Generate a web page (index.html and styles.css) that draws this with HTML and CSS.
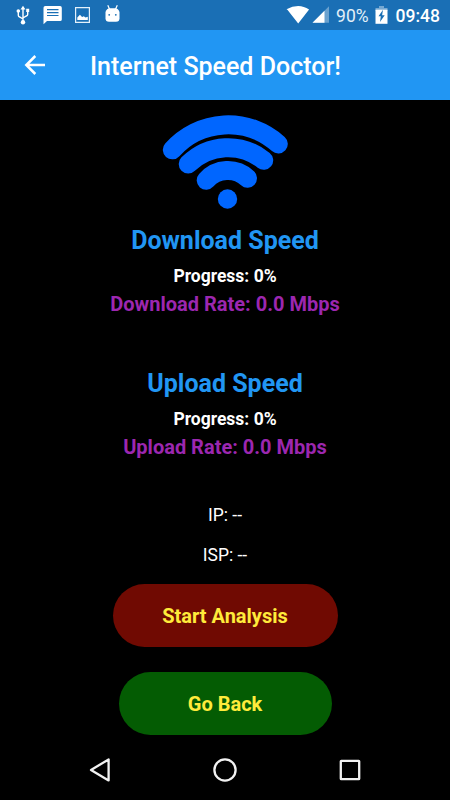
FILE: index.html
```
<!DOCTYPE html>
<html lang="en">
<head>
    <meta charset="UTF-8">
    <meta name="viewport" content="width=device-width, initial-scale=1.0">
    <title>Internet Speed Doctor!</title>
    <link rel="stylesheet" href="styles.css">
</head>
<body>
    <div class="status-bar">
        <svg class="status-icons" width="125" height="30" viewBox="0 0 125 30">
            <!-- usb -->
            <g fill="none" stroke="#fff" stroke-width="1.4">
                <path d="M23 22V8M18.3 12v3.2q0 1.3 1.3 1.8l3.4 2M27.7 11v3.2q0 1.3-1.3 1.8l-3.4 2"/>
            </g>
            <path d="M20.5 9.5L23 5.7l2.5 3.8zM26.2 8.7h3v3.2h-3z" fill="#fff"/>
            <circle cx="18.3" cy="11" r="1.8" fill="#fff"/>
            <circle cx="23" cy="22.3" r="2.2" fill="#fff"/>
            <!-- message -->
            <path d="M45.3 6h14.8q1.7 0 1.7 1.7v11.7q0 1.7-1.7 1.7H47l-3.5 3.2V7.7q0-1.7 1.8-1.7z" fill="#fff"/>
            <path d="M47 9.7h11.5M47 12.6h11.5M47 15.5h11.5" stroke="#1a6fb5" stroke-width="1.2"/>
            <!-- picture -->
            <path d="M75.6 7.7h13.8v14.6H75.6z" fill="none" stroke="#e4f1fb" stroke-width="1.2"/>
            <path d="M77.3 20v-2.5l2.6-2.7 2.2 2.2 1.7-.8 1.7 1.3 2.3-.7V20z" fill="#fff"/>
            <!-- android head -->
            <path d="M107.8 5.2l1.8 4M117.3 5.2l-1.8 4" stroke="#fff" stroke-width="1.2"/>
            <path d="M105.5 12q1-3.8 4.5-3.8h5q3.5 0 4.5 3.8v6.3q0 3.5-3.5 3.5h-7q-3.5 0-3.5-3.5z" fill="#fff"/>
            <circle cx="109.2" cy="14.8" r=".9" fill="#1a6fb5"/>
            <circle cx="115.8" cy="14.8" r=".9" fill="#1a6fb5"/>
        </svg>
        <div class="status-right">
            <svg width="42" height="30" viewBox="0 0 42 30">
                <path d="M-1.5 9.3Q4.5 6 10.2 6t10.9 3.5L10.2 23.5-.6 9.7z" fill="#fff"/>
                <path d="M24.5 22.8L41 6.2v16.6z" fill="#fff" opacity=".35"/>
                <path d="M24.5 22.8L36.5 10.7v12.1z" fill="#fff"/>
            </svg>
            <span class="battery-level">90%</span>
            <svg class="battery" width="13" height="30" viewBox="0 0 13 30">
                <path d="M4 6h5v2h3.5v3H.5V8H4z" fill="#fff" opacity=".4"/>
                <path d="M.5 9.7h12v14.1H.5z" fill="#fff"/>
                <path d="M8 9.8l-4.5 6.5h2.3L5 22l4.7-6.8H7.1z" fill="#1a6fb5"/>
            </svg>
            <span class="clock">09:48</span>
        </div>
    </div>

    <header class="app-bar">
        <svg class="back" width="20" height="20" viewBox="0 0 20 20">
            <path d="M20 10H1.8M10.3 1L1.3 10l9 9" fill="none" stroke="#fff" stroke-width="2.5"/>
        </svg>
        <h1>Internet Speed Doctor!</h1>
    </header>

    <main>
        <svg class="wifi" width="126" height="95" viewBox="162 115 126 95">
            <g fill="none" stroke="#06f" stroke-width="19" stroke-linecap="round">
                <path d="M172.3 149.8A75 75 0 0 1 278.3 144"/>
                <path d="M188.2 164.1A56.5 56.5 0 0 1 263.7 160.3"/>
                <path d="M206.2 180.3A29 29 0 0 1 247.5 178.2"/>
            </g>
            <circle cx="227.5" cy="199" r="9.7" fill="#06f"/>
        </svg>

        <section class="speed">
            <h2>Download Speed</h2>
            <p class="progress">Progress: 0%</p>
            <p class="rate">Download Rate: 0.0 Mbps</p>
        </section>

        <section class="speed">
            <h2>Upload Speed</h2>
            <p class="progress">Progress: 0%</p>
            <p class="rate">Upload Rate: 0.0 Mbps</p>
        </section>

        <div class="info">
            <p>IP: --</p>
            <p>ISP: --</p>
        </div>

        <div class="actions">
            <button class="start">Start Analysis</button>
            <button class="go-back">Go Back</button>
        </div>
    </main>

    <nav class="nav-bar">
        <svg width="24" height="24" viewBox="0 0 24 24"><path d="M20.6 1.4v21L3 12z"/></svg>
        <svg width="24" height="24" viewBox="0 0 24 24"><circle cx="12" cy="12" r="10.6"/></svg>
        <svg width="24" height="24" viewBox="0 0 24 24"><rect x="2.8" y="2.8" width="18.4" height="18.4" rx=".5"/></svg>
    </nav>
</body>
</html>
```
FILE: styles.css
```
* {
    box-sizing: border-box;
}
body {
    font-family: Roboto, sans-serif;
    background-color: #000;
    color: #fff;
    margin: 0;
    height: 800px;
    display: flex;
    flex-direction: column;
}
h1, h2, p {
    margin: 0;
}
svg {
    display: block;
    flex: none;
    overflow: visible;
}
.status-bar {
    flex: none;
    height: 30px;
    background-color: #1a6fb5;
    display: flex;
    justify-content: space-between;
}
.status-right {
    display: flex;
    align-items: center;
    padding-right: 10px;
    font-size: 17.5px;
    line-height: 30px;
    white-space: nowrap;
}
.battery-level {
    margin-left: 6px;
    padding-top: 2px;
    color: #e3eff8;
}
.battery {
    margin: 0 8px 0 6px;
}
.clock {
    font-weight: 500;
    padding-top: 2px;
}
.app-bar {
    flex: none;
    height: 70px;
    background-color: #2196f3;
    display: flex;
    align-items: center;
    padding-left: 25px;
}
.app-bar h1 {
    margin: 4px 0 0 45px;
    font-size: 25px;
    font-weight: 500;
    line-height: 30px;
}
main {
    flex: 1;
    display: flex;
    flex-direction: column;
    align-items: center;
    padding-top: 15px;
}
.wifi {
    margin-bottom: 16px;
}
.speed {
    text-align: center;
    font-weight: bold;
    height: 142.5px;
}
.speed h2 {
    font-size: 25px;
    line-height: 30px;
    color: #2196f3;
}
.progress {
    margin-top: 9px;
    font-size: 17.5px;
    line-height: 22px;
}
.rate {
    margin-top: 5px;
    font-size: 20px;
    line-height: 24px;
    color: #9c27b0;
}
.info {
    text-align: center;
    font-size: 17.5px;
    line-height: 40px;
    margin: -16px 0 9px;
}
.actions {
    display: flex;
    flex-direction: column;
    align-items: center;
    gap: 25px;
}
button {
    border: none;
    border-radius: 32px;
    height: 63px;
    font-family: inherit;
    font-size: 20px;
    font-weight: bold;
    color: #ffeb3b;
}
.start {
    width: 225px;
    background-color: #700a02;
}
.go-back {
    width: 213px;
    background-color: #045c03;
}
.nav-bar {
    flex: none;
    height: 60px;
    display: flex;
    justify-content: space-between;
    align-items: center;
    padding: 0 88px;
}
.nav-bar svg {
    fill: none;
    stroke: #f2f2f2;
    stroke-width: 2.3;
    stroke-linejoin: round;
}
```
